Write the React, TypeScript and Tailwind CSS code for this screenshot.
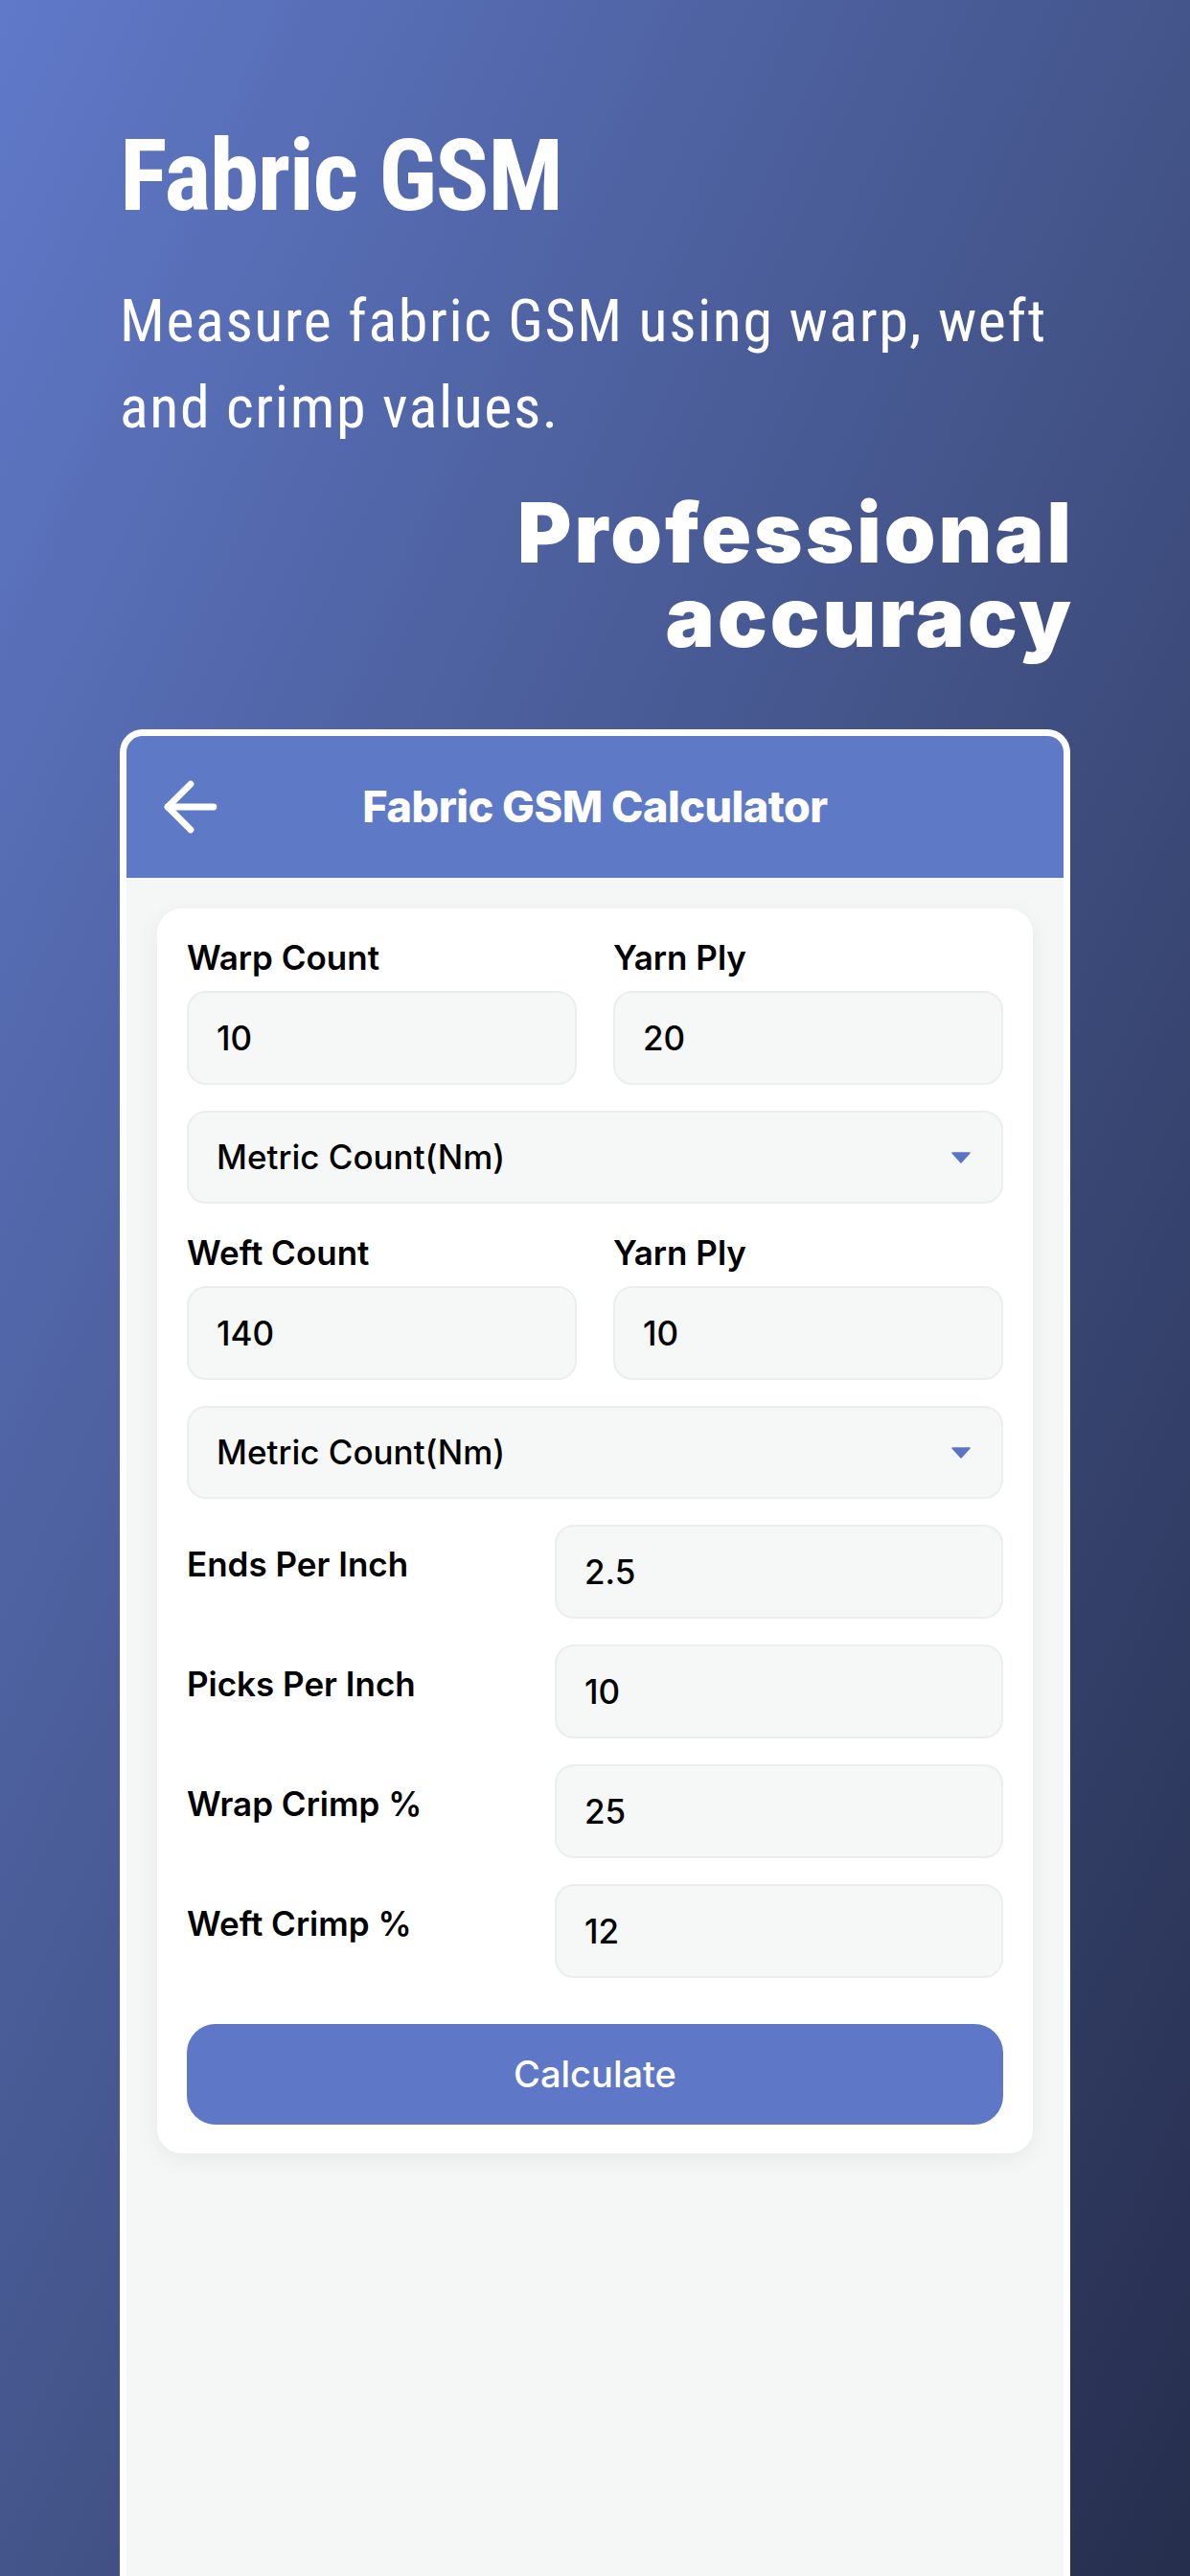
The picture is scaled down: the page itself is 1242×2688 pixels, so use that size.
import { ArrowLeft } from "lucide-react";

const condensed = "font-['Roboto_Condensed','Roboto','Liberation_Sans_Narrow',sans-serif] [font-stretch:75%]";
const ui = "font-['Inter','Roboto',sans-serif]";

function Field({ value }: { value: string }) {
  return (
    <div className="flex h-[98px] items-center rounded-[20px] border-2 border-[#ecedee] bg-[#f6f7f7] pl-[29px] text-[35px] font-medium text-black">
      {value}
    </div>
  );
}

function Select({ value }: { value: string }) {
  return (
    <div className="flex h-[97px] items-center justify-between rounded-[20px] border-2 border-[#ecedee] bg-[#f6f7f7] pl-[29px] pr-[32px] text-[35px] font-medium text-black">
      <span>{value}</span>
      <svg width="20" height="12" viewBox="0 0 20 12" aria-hidden>
        <path d="M1 1h18l-9 10z" fill="#5b74c8" stroke="#5b74c8" strokeWidth="1.5" strokeLinejoin="round" />
      </svg>
    </div>
  );
}

function PairBlock({ left, right }: { left: [string, string]; right: [string, string] }) {
  return (
    <div className="grid grid-cols-2 gap-x-[38px]">
      <div className="flex flex-col">
        <span className="mb-[14px] text-[35px] leading-[41px] font-semibold text-black">{left[0]}</span>
        <Field value={left[1]} />
      </div>
      <div className="flex flex-col">
        <span className="mb-[14px] text-[35px] leading-[41px] font-semibold text-black">{right[0]}</span>
        <Field value={right[1]} />
      </div>
    </div>
  );
}

function RowField({ label, value }: { label: string; value: string }) {
  return (
    <div className="flex items-start">
      <span className="mt-[21px] w-[384px] shrink-0 text-[35px] leading-[41px] font-semibold text-black">{label}</span>
      <div className="flex-1">
        <Field value={value} />
      </div>
    </div>
  );
}

export default function App() {
  return (
    <div className="h-[2688px] w-[1242px] overflow-hidden bg-gradient-to-br from-[#6079c9] via-[#44558b] to-[#262e4d]">
      <div className="flex flex-col px-[125px] pt-[121px]">
        <h1 className={`${condensed} text-[104px] leading-[125px] font-bold tracking-[-1.5px] text-white`}>Fabric GSM</h1>
        <p className={`${condensed} mt-[44px] text-[62px] leading-[90px] font-normal tracking-[1.6px] text-white`}>
          Measure fabric GSM using warp, weft and crimp values.
        </p>
        <div className={`${ui} mr-[-4px] mt-[42px] flex flex-col items-end text-[86px] font-black tracking-[3px] text-white`}>
          <span className="leading-[88px]">Professional</span>
          <span className="leading-[88px]">accuracy</span>
        </div>
      </div>

      <div className="ml-[125px] mt-[73px] flex h-[2000px] w-[992px] flex-col overflow-hidden rounded-t-[24px] border-[7px] border-b-0 border-white bg-[#f5f7f6]">
        <div className="grid h-[148px] grid-cols-[1fr_auto_1fr] items-center bg-[#5e79c6]">
          <ArrowLeft size={82} strokeWidth={2} color="white" className="ml-[26px]" />
          <span className={`${ui} text-[45px] font-extrabold tracking-[-0.5px] text-white`}>Fabric GSM Calculator</span>
          <span />
        </div>

        <div className={`${ui} mx-8 mt-8 flex flex-col rounded-[26px] bg-white px-[31px] pb-[30px] pt-[31px] shadow-[0_6px_24px_rgba(0,0,0,0.06)]`}>
          <PairBlock left={["Warp Count", "10"]} right={["Yarn Ply", "20"]} />
          <div className="mt-[27px]">
            <Select value="Metric Count(Nm)" />
          </div>
          <div className="mt-[31px]">
            <PairBlock left={["Weft Count", "140"]} right={["Yarn Ply", "10"]} />
          </div>
          <div className="mt-[27px]">
            <Select value="Metric Count(Nm)" />
          </div>
          <div className="mt-[27px] flex flex-col gap-[27px]">
            <RowField label="Ends Per Inch" value="2.5" />
            <RowField label="Picks Per Inch" value="10" />
            <RowField label="Wrap Crimp %" value="25" />
            <RowField label="Weft Crimp %" value="12" />
          </div>
          <button className="mt-[48px] flex h-[105px] items-center justify-center rounded-[30px] bg-[#5e78c7] text-[38px] font-medium text-white">
            Calculate
          </button>
        </div>
      </div>
    </div>
  );
}
